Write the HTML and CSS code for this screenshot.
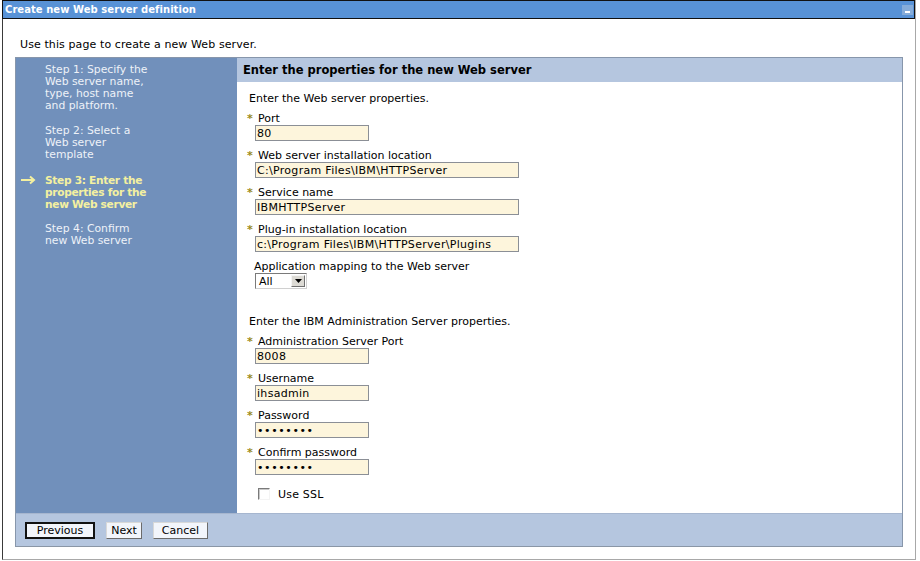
FILE: index.html
```html
<!DOCTYPE html>
<html>
<head>
<meta charset="utf-8">
<title>Create new Web server definition</title>
<link rel="stylesheet" href="styles.css">
</head>
<body>
<div class="window">
  <div class="titlebar">
    <span class="title">Create new Web server definition</span>
    <span class="minbtn"><span class="dash"></span></span>
  </div>
  <p class="pageintro">Use this page to create a new Web server.</p>
  <div class="wizard">
    <div class="wz-body">
      <div class="steps">
        <div class="step">Step 1: Specify the<br>Web server name,<br>type, host name<br>and platform.</div>
        <div class="step">Step 2: Select a<br>Web server<br>template</div>
        <div class="step current"><span class="arrow"><svg width="16" height="10" viewBox="0 0 16 10"><path d="M1 5H14M10 1.5L14 5L10 8.5" fill="none" stroke="#f4f0a0" stroke-width="2"/></svg></span>Step 3: Enter the<br>properties for the<br>new Web server</div>
        <div class="step">Step 4: Confirm<br>new Web server</div>
      </div>
      <div class="main">
        <div class="main-head">Enter the properties for the new Web server</div>
        <div class="main-content">
          <p class="section">Enter the Web server properties.</p>
          <div class="field">
            <div class="label"><span class="req">*</span>Port</div>
            <input class="txt short" type="text" value="80">
          </div>
          <div class="field">
            <div class="label"><span class="req">*</span>Web server installation location</div>
            <input class="txt long" type="text" value="C:\Program Files\IBM\HTTPServer">
          </div>
          <div class="field">
            <div class="label"><span class="req">*</span>Service name</div>
            <input class="txt long" type="text" value="IBMHTTPServer">
          </div>
          <div class="field">
            <div class="label"><span class="req">*</span>Plug-in installation location</div>
            <input class="txt long" type="text" value="c:\Program Files\IBM\HTTPServer\Plugins">
          </div>
          <div class="field">
            <div class="label plain">Application mapping to the Web server</div>
            <div class="select"><span class="sel-val">All</span><span class="sel-btn"><svg width="7" height="4" viewBox="0 0 7 4"><path d="M0 0H7L3.5 4Z" fill="#000"/></svg></span></div>
          </div>
          <p class="section admin">Enter the IBM Administration Server properties.</p>
          <div class="field">
            <div class="label"><span class="req">*</span>Administration Server Port</div>
            <input class="txt short" type="text" value="8008">
          </div>
          <div class="field">
            <div class="label"><span class="req">*</span>Username</div>
            <input class="txt short" type="text" value="ihsadmin">
          </div>
          <div class="field">
            <div class="label"><span class="req">*</span>Password</div>
            <input class="txt short pw" type="password" value="abcdefgh">
          </div>
          <div class="field">
            <div class="label"><span class="req">*</span>Confirm password</div>
            <input class="txt short pw" type="password" value="abcdefgh">
          </div>
          <div class="check">
            <span class="box"></span><span class="check-label">Use SSL</span>
          </div>
        </div>
      </div>
    </div>
    <div class="wz-buttons">
      <button class="btn default">Previous</button>
      <button class="btn next">Next</button>
      <button class="btn cancel">Cancel</button>
    </div>
  </div>
</div>
</body>
</html>
```
FILE: styles.css
```css
html, body {
  margin: 0;
  padding: 0;
  background: #ffffff;
}
body {
  font-family: "DejaVu Sans", Verdana, sans-serif;
  font-size: 11px;
  color: #000;
}
.window {
  margin-left: 2px;
  width: 912px;
  height: 559px;
  border-left: 1px solid #3a3a3a;
  border-right: 1px solid #a8a8a8;
  border-bottom: 1px solid #a8a8a8;
}
.titlebar {
  height: 17px;
  background: #5892d6;
  border: 1px solid #111;
  margin-left: -1px;
  display: flex;
  align-items: center;
  justify-content: space-between;
}
.title {
  color: #fff;
  font-weight: bold;
  font-size: 10px;
  padding-left: 2px;
  letter-spacing: 0.05px;
}
.minbtn {
  width: 11px;
  height: 8px;
  background: #86acd9;
  margin-right: 1px;
  display: flex;
  align-items: flex-end;
  justify-content: center;
  padding-bottom: 2px;
  box-sizing: content-box;
}
.dash {
  width: 5px;
  height: 2px;
  background: #fff;
}
.pageintro {
  margin: 20px 0 0 17px;
  height: 18px;
  line-height: 12px;
  letter-spacing: 0.1px;
}
.wizard {
  margin-left: 12px;
  width: 886px;
  border: 1px solid #8796ab;
  border-bottom-color: #8a96a6;
}
.wz-body {
  display: flex;
}
.steps {
  width: 221px;
  flex: none;
  background: #7190bb;
  color: #eef2f8;
  padding-top: 6px;
  box-sizing: border-box;
}
.step {
  position: relative;
  padding-left: 29px;
  line-height: 12px;
  margin-bottom: 13px;
  white-space: nowrap;
  font-size: 10.8px;
}
.step.current {
  color: #f4f0a0;
  font-weight: bold;
  letter-spacing: -0.3px;
  font-size: 10.6px;
}
.arrow {
  position: absolute;
  left: 4px;
  top: 1px;
}
.main {
  flex: 1;
  background: #fff;
}
.main-head {
  height: 24px;
  line-height: 24px;
  background: #b5c6df;
  font-weight: bold;
  font-size: 11.5px;
  padding-left: 6px;
  color: #000;
}
.main-content {
  padding: 11px 0 12px 10px;
}
.section {
  margin: 0 0 7px 2px;
  line-height: 12px;
}
.section.admin {
  margin-top: 27px;
}
.field {
  margin-bottom: 8px;
}
.label {
  line-height: 13px;
  height: 13px;
  white-space: nowrap;
}
.label.plain {
  padding-left: 7px;
}
.req {
  display: inline-block;
  width: 11px;
  color: #9a8a1a;
  font-weight: bold;
}
.txt {
  display: block;
  margin: 0 0 0 8px;
  height: 16px;
  box-sizing: border-box;
  border: 1px solid #8b8f96;
  background: #fdf5dc;
  font-family: "DejaVu Sans", Verdana, sans-serif;
  font-size: 11px;
  letter-spacing: 0.3px;
  padding: 0 0 0 1px;
  color: #000;
  outline: none;
}
.txt.short { width: 114px; }
.txt.long { width: 264px; }
.txt.pw { letter-spacing: 0.6px; }
.select {
  margin-left: 8px;
  width: 52px;
  height: 16px;
  box-sizing: border-box;
  border: 1px solid #7a7a7a;
  border-right-color: #d0d0d0;
  border-bottom-color: #d0d0d0;
  background: #fff;
  display: flex;
  align-items: center;
  justify-content: space-between;
}
.sel-val {
  padding-left: 3px;
}
.sel-btn {
  width: 14px;
  height: 12px;
  margin-right: 1px;
  background: #dcdad4;
  border: 1px solid #f4f4f4;
  border-right-color: #707070;
  border-bottom-color: #707070;
  box-sizing: border-box;
  display: flex;
  align-items: center;
  justify-content: center;
}
.check {
  display: flex;
  align-items: center;
  margin: 12px 0 0 11px;
  height: 14px;
}
.box {
  width: 12px;
  height: 12px;
  box-sizing: border-box;
  border: 1px solid #f4f4f4;
  border-top-color: #7a7a7a;
  border-left-color: #7a7a7a;
  background: #fff;
  box-shadow: inset 1px 1px 0 #c8c8c8;
}
.check-label {
  margin-left: 8px;
  letter-spacing: 0.2px;
}
.wz-buttons {
  height: 33px;
  background: #b5c6df;
  display: flex;
  align-items: flex-start;
  padding: 8px 0 0 9px;
  border-top: 1px solid #a6b6cf;
  box-sizing: border-box;
}
.btn {
  display: block;
  box-sizing: border-box;
  font-family: "DejaVu Sans", Verdana, sans-serif;
  font-size: 11px;
  height: 17px;
  padding: 0;
  margin: 0 11px 0 0;
  background: #f2f5fb;
  border: 1px solid #6b6b6b;
  border-top-color: #d8d8d8;
  border-left-color: #d8d8d8;
  color: #000;
  line-height: 13px;
  text-align: center;
}
.btn.default {
  border: 2px solid #111;
  line-height: 11px;
  width: 70px;
}
.btn.next { width: 36px; }
.btn.cancel { width: 55px; }
```
